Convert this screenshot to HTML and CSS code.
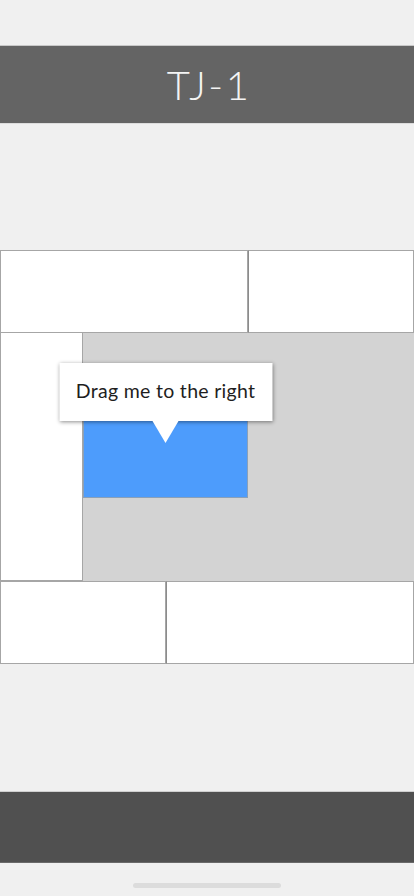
FILE: index.html
```html
<!DOCTYPE html>
<html lang="en">
<head>
    <meta charset="UTF-8">
    <meta name="viewport" content="width=device-width, initial-scale=1.0">
    <title>TJ-1</title>
    <link rel="stylesheet" href="styles.css">
</head>
<body>
    <div class="screen">
        <header class="topbar">
            <h1 class="title">TJ-1</h1>
        </header>

        <main class="board">
            <div class="cell cell-top-wide"></div>
            <div class="cell cell-top-narrow"></div>
            <div class="cell cell-side"></div>
            <div class="track">
                <div class="block">
                    <div class="tip">Drag me to the right</div>
                </div>
            </div>
            <div class="cell cell-bottom-narrow"></div>
            <div class="cell cell-bottom-wide"></div>
        </main>

        <footer class="bottombar"></footer>
        <div class="home-indicator"></div>
    </div>
</body>
</html>
```

FILE: styles.css
```css
* {
    box-sizing: border-box;
}
html, body {
    margin: 0;
    padding: 0;
}
body {
    background-color: #f0f0f0;
    font-family: Lato, "Open Sans", sans-serif;
}
.screen {
    height: 896px;
    display: flex;
    flex-direction: column;
}
.topbar {
    margin-top: 45px;
    height: 79px;
    background-color: #646464;
    border-top: 1px solid #c8c8c8;
    border-bottom: 1px solid #dcdcdc;
    display: flex;
    align-items: center;
    justify-content: center;
    padding-left: 4px;
}
.title {
    margin: 0;
    color: #f4f4f4;
    font-size: 40px;
    font-weight: 300;
    letter-spacing: 2.5px;
}
.board {
    margin-top: 126px;
    display: grid;
    grid-template-columns: repeat(5, 1fr);
    grid-template-rows: repeat(5, 82.8px);
}
.cell {
    background-color: #fff;
    border: 1px solid #a6a6a6;
}
.cell-top-wide {
    grid-column: 1 / 4;
}
.cell-top-narrow {
    grid-column: 4 / 6;
    border-left-color: #8c8c8c;
}
.cell-side {
    grid-column: 1 / 2;
    grid-row: 2 / 5;
    border-top: none;
}
.track {
    grid-column: 2 / 6;
    grid-row: 2 / 5;
    background-color: #d3d3d3;
    display: grid;
    grid-template-columns: repeat(4, 1fr);
    grid-template-rows: repeat(3, 1fr);
}
.block {
    grid-column: 1 / 3;
    grid-row: 2 / 3;
    background-color: #4d9cfc;
    border: 1px solid #8aa0b8;
    border-top: none;
    position: relative;
}
.tip {
    position: absolute;
    left: 50%;
    bottom: calc(100% - 5px);
    transform: translateX(-50%);
    width: 213px;
    height: 58px;
    padding-bottom: 3px;
    background-color: #fff;
    color: #1e1e1e;
    font-size: 19.5px;
    font-weight: 400;
    letter-spacing: 0.3px;
    display: flex;
    align-items: center;
    justify-content: center;
    box-shadow: 0 1px 4px rgba(0, 0, 0, 0.45);
    white-space: nowrap;
}
.tip::after {
    content: "";
    position: absolute;
    left: 50%;
    top: 100%;
    transform: translateX(-50%);
    border-left: 13px solid transparent;
    border-right: 13px solid transparent;
    border-top: 22px solid #fff;
}
.cell-bottom-narrow {
    grid-column: 1 / 3;
}
.cell-bottom-wide {
    grid-column: 3 / 6;
    border-left-color: #8c8c8c;
}
.bottombar {
    margin-top: 127px;
    height: 72px;
    background-color: #505050;
    border-top: 1px solid #cfcfcf;
    border-bottom: 1px solid #6a6a6a;
}
.home-indicator {
    margin: 20px auto 0;
    width: 148px;
    height: 5px;
    border-radius: 3px;
    background-color: #dcdcdc;
}
```
